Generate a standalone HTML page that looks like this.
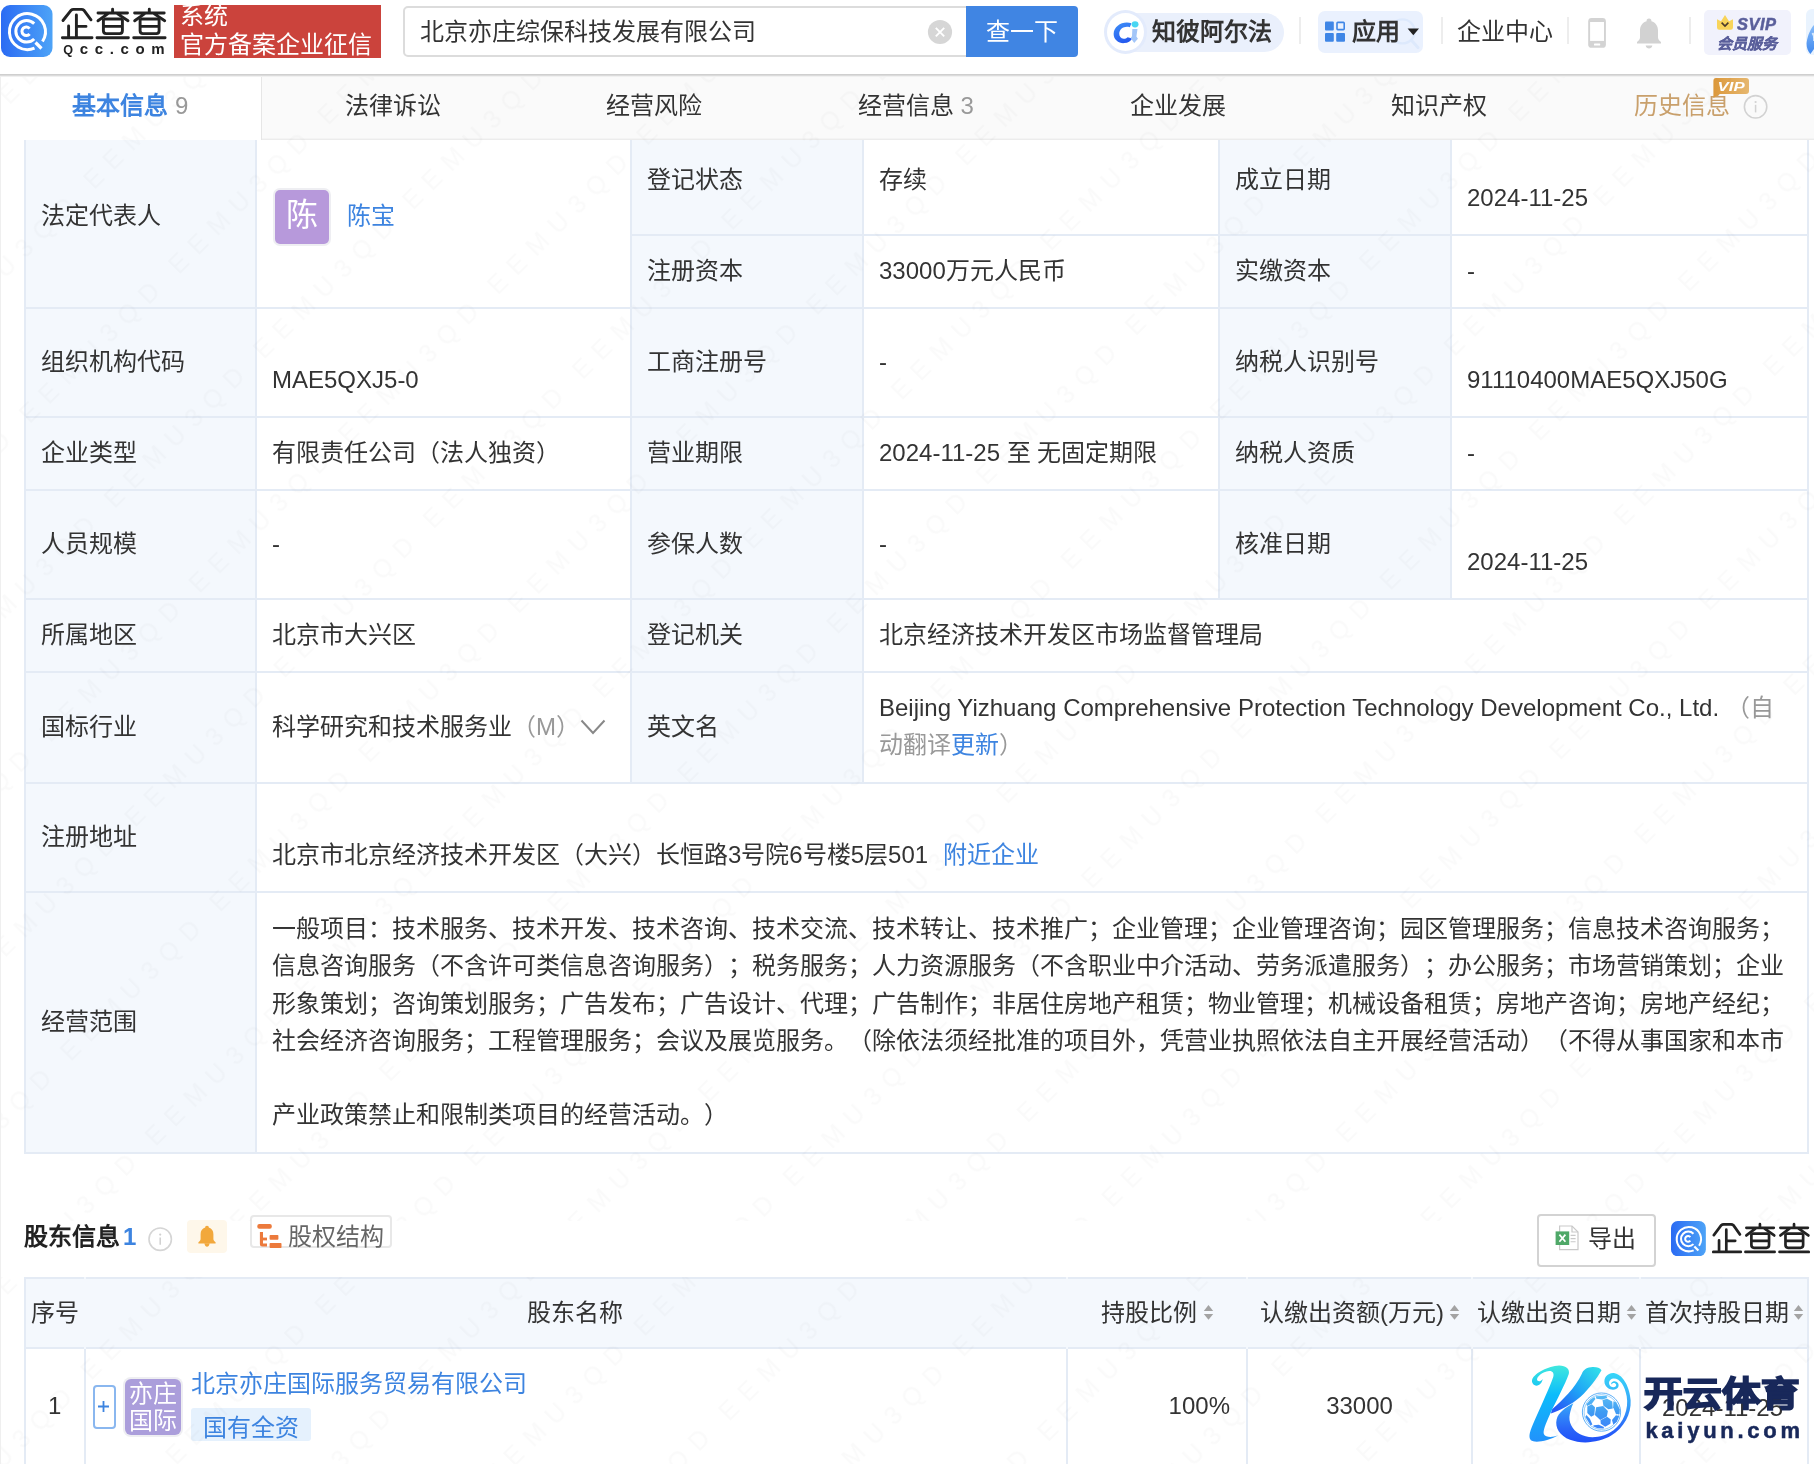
<!DOCTYPE html>
<html lang="zh-CN">
<head>
<meta charset="utf-8">
<title>企查查</title>
<style>
*{box-sizing:border-box;margin:0;padding:0}
html,body{width:1814px;height:1464px;overflow:hidden;background:#fff}
body{will-change:transform;position:relative;text-spacing-trim:space-all;font-family:"Liberation Sans",sans-serif;font-size:24px;color:#333;line-height:30px}
.a{position:absolute;white-space:nowrap}
.t{position:absolute;white-space:nowrap;height:30px;line-height:30px;font-size:24px}
.blue{color:#3d84e0}
.gray{color:#999}
/* header */
#hdr{position:absolute;left:0;top:0;width:1814px;height:77px;background:linear-gradient(#fff 0,#fff 74px,#cfcfcf 74px,#cfcfcf 75px,#dbdbdb 75px,#dbdbdb 76px,#f0f0f0 76px,#f0f0f0 77px);z-index:2}
.sep{position:absolute;width:2px;top:17px;height:27px;background:#ededed}
/* tabs */
#tabs{position:absolute;left:0;top:76px;width:1832px;height:64px;background:#fafafa;border-bottom:1px solid #ececec;box-shadow:inset 0 -1px 0 #f4f4f4}
.tab{position:absolute;top:0;height:63px;width:261.7px;text-align:center;line-height:60px;font-size:24px;color:#333}
.tab.on{background:#fff;color:#3d84e0;height:64px;font-weight:bold;border-right:1px solid #e6e6e6}
/* info table */
.cell{position:absolute;border-right:2px solid #e4ebf5;border-bottom:2px solid #e4ebf5;background:#fff}
.lb{background:#f4f8fd}
</style>
</head>
<body>
<!-- HEADER -->
<div id="hdr">
<!-- qcc logo icon -->
<svg class="a" style="left:1px;top:5px" width="52" height="52" viewBox="0 0 52 52">
<defs><linearGradient id="lg1" x1="0" y1="0" x2="1" y2="0"><stop offset="0" stop-color="#2b6bf3"/><stop offset="1" stop-color="#4da3f7"/></linearGradient></defs>
<rect x="0" y="0" width="51.5" height="52" rx="9" fill="url(#lg1)"/>
<g fill="none" stroke="#fff" stroke-width="3">
<path d="M41.5 36.5 A18 18 0 1 0 33.5 43.2"/>
<path d="M34.5 37.5 L40.5 43.5" stroke-width="3.2"/>
<path d="M33.2 18.6 A10.8 10.8 0 1 0 33.2 34"/>
<path d="M28.6 23.6 A4.3 4.3 0 1 0 28.6 29"/>
</g>
</svg>
<!-- qcc logotype -->
<svg class="a" style="left:58px;top:5px" width="112" height="52" viewBox="58 5 112 52">
<g fill="none" stroke="#222" stroke-width="2.9" stroke-linecap="round" stroke-linejoin="round">
<path d="M63 20.5 L71 10.3 Q72 9.4 73.5 9.4 L81.5 9.4 Q83 9.4 84 10.3 L91 19.8"/>
<path d="M76.4 15 V37.6 M76.6 26.4 H86 M68.6 26 V37.6 M62.4 37.8 H92"/>
<path d="M98 13 H127.5 M112.6 9.3 V13 M108 13.6 L98 20.8 M117.3 13.6 L128 20.8"/>
<path d="M103.4 20 V30.8 Q103.4 33.6 106.2 33.6 H119.6 Q122.4 33.6 122.4 30.8 V20 M103.4 26.4 H122.4 M105 19 H121 M97 37.8 H128.4"/>
<path d="M134.6 13 H164.2 M149.3 9.3 V13 M144.7 13.6 L134.7 20.8 M154 13.6 L164.7 20.8"/>
<path d="M140.1 20 V30.8 Q140.1 33.6 142.9 33.6 H156.3 Q159.1 33.6 159.1 30.8 V20 M140.1 26.4 H159.1 M141.7 19 H157.7 M133.7 37.8 H165.1"/>
</g>
<text x="63.2" y="53.5" font-family="Liberation Sans, sans-serif" font-weight="bold" font-size="15" fill="#222" textLength="101.4" lengthAdjust="spacing"><tspan font-size="12.6">Q</tspan>cc.com</text>
</svg>
<!-- red box -->
<div class="a" style="left:174px;top:5px;width:207px;height:53px;background:#cb433c;overflow:hidden">
<div class="a" style="left:6px;top:-4px;font-size:24px;line-height:29px;color:#fff">系统<br>官方备案企业征信</div>
</div>
<div class="a" style="left:181px;top:70px;width:48px;height:4px;overflow:hidden;opacity:.0"></div>
<!-- search -->
<div class="a" style="left:403px;top:6px;width:566px;height:51px;border:2px solid #dcdcdc;border-radius:5px 0 0 5px;background:#fff"></div>
<div class="t" style="left:420px;top:17px;color:#333">北京亦庄综保科技发展有限公司</div>
<svg class="a" style="left:927px;top:19px" width="26" height="26" viewBox="0 0 26 26"><circle cx="13" cy="13" r="12.1" fill="#d6d6d6"/><path d="M8.8 8.9 L17.2 17.3 M17.2 8.9 L8.8 17.3" stroke="#fff" stroke-width="1.9" fill="none"/></svg>
<div class="a" style="left:966px;top:6px;width:112px;height:51px;background:#4085e3;border-radius:0 4px 4px 0;color:#fff;text-align:center;font-size:24px;line-height:52px">查一下</div>
<!-- zhibi alpha -->
<div class="a" style="left:1106px;top:13px;width:178px;height:39px;border-radius:20px;background:#eaf0fc"></div>
<div class="a" style="left:1104px;top:10px;width:43px;height:44px;border-radius:50%;background:#fff;border:3.5px solid #e3ebfc"></div>
<svg class="a" style="left:1109.6px;top:16.6px" width="33" height="30.6" viewBox="0 0 30 30" preserveAspectRatio="none">
<defs><linearGradient id="lg2" x1="0.2" y1="0" x2="0.6" y2="1"><stop offset="0" stop-color="#3d8df7"/><stop offset="1" stop-color="#2458ee"/></linearGradient></defs>
<path d="M19.5 6.2 C12 3.5 3.5 8.5 3.3 16.5 C3.2 22.5 8 26 13 25.6 C16.5 25.3 18.8 23.5 20.2 21 L16 19.8 C14.8 21 13.6 21.4 12.4 21.3 C9.8 21.1 8.2 19 8.4 16 C8.7 11.5 13 8.5 18 10 Z" fill="url(#lg2)"/>
<circle cx="22.8" cy="7.2" r="3.1" fill="#48d6f2"/>
<path d="M20.3 11.8 L25 11.8 L24 19.2 L25.4 21.4 L22 25.6 L18.8 20.7 L20 18.8 Z" fill="#a3c6f8"/>
</svg>
<div class="t" style="left:1152px;top:17px;font-weight:bold;color:#333">知彼阿尔法</div>
<div class="sep" style="left:1299px"></div>
<!-- apps -->
<div class="a" style="left:1318px;top:11px;width:105px;height:42px;border-radius:7px;background:#eaf1fe"></div>
<svg class="a" style="left:1384px;top:14px" width="40" height="40" viewBox="1384 14 40 40"><circle cx="1402.6" cy="31.4" r="12" fill="none" stroke="#dde9fc" stroke-width="2.4"/><path d="M1411.6 40.6 L1418 47.6" stroke="#dde9fc" stroke-width="3" stroke-linecap="round"/></svg>
<svg class="a" style="left:1324px;top:21px" width="22" height="22" viewBox="0 0 22 22"><rect x="1" y="0.6" width="8.8" height="8.8" rx="1" fill="#3f86e6"/><rect x="1" y="12" width="8.8" height="8.8" rx="1" fill="#3f86e6"/><rect x="12.2" y="12" width="8.8" height="8.8" rx="1" fill="#3f86e6"/><rect x="13" y="1.4" width="7.2" height="7.2" rx=".8" fill="none" stroke="#3f86e6" stroke-width="1.6"/></svg>
<div class="t" style="left:1352px;top:17px;font-weight:bold;color:#333">应用</div>
<svg class="a" style="left:1407px;top:28px" width="13" height="8" viewBox="0 0 13 8"><path d="M0.6 0.6 H12 L6.3 7.2 Z" fill="#222"/></svg>
<div class="sep" style="left:1441px"></div>
<div class="t" style="left:1457px;top:17px;color:#333">企业中心</div>
<div class="sep" style="left:1567px"></div>
<!-- phone -->
<svg class="a" style="left:1587px;top:17px" width="20" height="32" viewBox="0 0 20 32"><rect x="1.2" y="1.1" width="17.7" height="29.7" rx="3.4" fill="#d3d3d3"/><rect x="3.1" y="5" width="13.9" height="18.9" fill="#fff"/><rect x="7" y="26.6" width="6.2" height="1.9" rx=".6" fill="#fff"/></svg>
<!-- bell -->
<svg class="a" style="left:1635px;top:17px" width="28" height="34" viewBox="0 0 28 34"><path d="M14 1.6 C15.6 1.6 16.6 2.7 16.4 4.2 C20.6 5.4 23 9 23 13.5 V20.5 C23 22.3 24.4 23.6 26 25 V26.6 H2 V25 C3.6 23.6 5 22.3 5 20.5 V13.5 C5 9 7.4 5.4 11.6 4.2 C11.4 2.7 12.4 1.6 14 1.6 Z" fill="#d2d2d2"/><path d="M10.6 28.6 H17.4 C17 30.6 15.6 31.6 14 31.6 C12.4 31.6 11 30.6 10.6 28.6 Z" fill="#d2d2d2"/></svg>
<div class="sep" style="left:1689px;top:17px"></div>
<!-- svip -->
<div class="a" style="left:1704px;top:10px;width:87px;height:45px;border-radius:5px;background:#f1f2fc"></div>
<svg class="a" style="left:1716px;top:14px" width="18" height="17" viewBox="0 0 18 17"><path d="M1 5.2 L5 7.2 L9 1 L13 7.2 L17 5.2 V13.6 Q17 15.8 14.8 15.8 H3.2 Q1 15.8 1 13.6 Z" fill="#f8d45a"/><path d="M5.6 8.6 L9 12 L12.4 8.6" fill="none" stroke="#4a3a2a" stroke-width="1.6"/></svg>
<div class="a" style="left:1737px;top:14px;font-size:16.5px;line-height:20px;font-weight:bold;font-style:italic;color:#5a5f9b;letter-spacing:.5px;-webkit-text-stroke:.5px #5a5f9b">SVIP</div>
<div class="a" style="left:1717px;top:34px;font-size:15px;line-height:20px;font-weight:bold;font-style:italic;color:#5a5f9b;-webkit-text-stroke:.3px #5a5f9b">会员服务</div>
<!-- avatar partial -->
<div class="a" style="left:1806px;top:9px;width:46px;height:46px;border-radius:6px;background:#e9f3fe;overflow:hidden"><svg class="a" style="left:0;top:0" width="46" height="46" viewBox="0 0 46 46"><defs><linearGradient id="lg4" x1="0" y1="0" x2="0" y2="1"><stop offset="0" stop-color="#8cc0fa"/><stop offset="1" stop-color="#3d86ee"/></linearGradient></defs><path d="M8 16 C5 19 1.6 26 0.6 34 C0.4 38 1.6 42 4.4 45 L8 40 L8 46 L46 46 L46 14 Z" fill="url(#lg4)"/><path d="M6.4 24 C8 26 8.4 29 8 32" fill="none" stroke="#d8eafd" stroke-width="2"/></svg></div>
</div>

<!-- TABS -->
<div id="tabs">
<div class="tab on" style="left:0"><span style="font-weight:bold">基本信息</span> <span style="color:#999;font-weight:normal">9</span></div>
<div class="tab" style="left:261.7px">法律诉讼</div>
<div class="tab" style="left:523.4px">经营风险</div>
<div class="tab" style="left:785.1px">经营信息 <span style="color:#999">3</span></div>
<div class="tab" style="left:1046.8px">企业发展</div>
<div class="tab" style="left:1308.5px">知识产权</div>
<div class="tab" style="left:1570.2px;color:#c9a06c;text-align:left;padding-left:64px">历史信息</div>
<svg class="a" style="left:1712px;top:1px" width="38" height="22" viewBox="0 0 38 22"><defs><linearGradient id="lg3" x1="0" y1="0" x2="1" y2="0"><stop offset="0" stop-color="#dc983a"/><stop offset="1" stop-color="#e6b76f"/></linearGradient></defs><path d="M4 1 H34 Q37 1 37 4 V14 Q37 17 34 17 H8 L1.4 21 V4 Q1.4 1 4 1 Z" fill="url(#lg3)"/><text x="5.6" y="14" font-family="Liberation Sans, sans-serif" font-weight="bold" font-style="italic" font-size="13.5" fill="#fff" textLength="27" lengthAdjust="spacingAndGlyphs">VIP</text></svg>
<svg class="a" style="left:1743px;top:18px" width="26" height="26" viewBox="0 0 26 26"><circle cx="12.6" cy="12.8" r="11.2" fill="none" stroke="#d2d2d2" stroke-width="1.6"/><circle cx="12.6" cy="8" r="1.1" fill="#d2d2d2"/><path d="M12.6 10.8 V18.4" stroke="#d2d2d2" stroke-width="1.5"/></svg>
</div>
<div class="a pageborder" style="left:0;top:77px;width:1px;height:1400px;background:#efefef;z-index:3"></div>

<!-- INFO TABLE -->
<div id="info">
<div class="cell lb" style="left:26px;top:140px;width:231px;height:169px"></div>
<div class="cell" style="left:257px;top:140px;width:375px;height:169px"></div>
<div class="cell lb" style="left:632px;top:140px;width:232px;height:96px"></div>
<div class="cell" style="left:864px;top:140px;width:356px;height:96px"></div>
<div class="cell lb" style="left:1220px;top:140px;width:232px;height:96px"></div>
<div class="cell" style="left:1452px;top:140px;width:357px;height:96px"></div>
<div class="cell lb" style="left:632px;top:236px;width:232px;height:73px"></div>
<div class="cell" style="left:864px;top:236px;width:356px;height:73px"></div>
<div class="cell lb" style="left:1220px;top:236px;width:232px;height:73px"></div>
<div class="cell" style="left:1452px;top:236px;width:357px;height:73px"></div>
<div class="cell lb" style="left:26px;top:309px;width:231px;height:109px"></div>
<div class="cell" style="left:257px;top:309px;width:375px;height:109px"></div>
<div class="cell lb" style="left:632px;top:309px;width:232px;height:109px"></div>
<div class="cell" style="left:864px;top:309px;width:356px;height:109px"></div>
<div class="cell lb" style="left:1220px;top:309px;width:232px;height:109px"></div>
<div class="cell" style="left:1452px;top:309px;width:357px;height:109px"></div>
<div class="cell lb" style="left:26px;top:418px;width:231px;height:73px"></div>
<div class="cell" style="left:257px;top:418px;width:375px;height:73px"></div>
<div class="cell lb" style="left:632px;top:418px;width:232px;height:73px"></div>
<div class="cell" style="left:864px;top:418px;width:356px;height:73px"></div>
<div class="cell lb" style="left:1220px;top:418px;width:232px;height:73px"></div>
<div class="cell" style="left:1452px;top:418px;width:357px;height:73px"></div>
<div class="cell lb" style="left:26px;top:491px;width:231px;height:109px"></div>
<div class="cell" style="left:257px;top:491px;width:375px;height:109px"></div>
<div class="cell lb" style="left:632px;top:491px;width:232px;height:109px"></div>
<div class="cell" style="left:864px;top:491px;width:356px;height:109px"></div>
<div class="cell lb" style="left:1220px;top:491px;width:232px;height:109px"></div>
<div class="cell" style="left:1452px;top:491px;width:357px;height:109px"></div>
<div class="cell lb" style="left:26px;top:600px;width:231px;height:73px"></div>
<div class="cell" style="left:257px;top:600px;width:375px;height:73px"></div>
<div class="cell lb" style="left:632px;top:600px;width:232px;height:73px"></div>
<div class="cell" style="left:864px;top:600px;width:945px;height:73px"></div>
<div class="cell lb" style="left:26px;top:673px;width:231px;height:111px"></div>
<div class="cell" style="left:257px;top:673px;width:375px;height:111px"></div>
<div class="cell lb" style="left:632px;top:673px;width:232px;height:111px"></div>
<div class="cell" style="left:864px;top:673px;width:945px;height:111px"></div>
<div class="cell lb" style="left:26px;top:784px;width:231px;height:109px"></div>
<div class="cell" style="left:257px;top:784px;width:1552px;height:109px"></div>
<div class="cell lb" style="left:26px;top:893px;width:231px;height:261px"></div>
<div class="cell" style="left:257px;top:893px;width:1552px;height:261px"></div>
<div class="a" style="left:24px;top:140px;width:2px;height:1014px;background:#e4ebf5"></div>
<div class="t" style="left:41px;top:200.5px">法定代表人</div>
<div class="t" style="left:647px;top:165px">登记状态</div>
<div class="t" style="left:879px;top:165px">存续</div>
<div class="t" style="left:1235px;top:165px">成立日期</div>
<div class="t" style="left:1467px;top:183px">2024-11-25</div>
<div class="t" style="left:647px;top:256px">注册资本</div>
<div class="t" style="left:879px;top:256px">33000万元人民币</div>
<div class="t" style="left:1235px;top:256px">实缴资本</div>
<div class="t" style="left:1467px;top:256px">-</div>
<div class="t" style="left:41px;top:347px">组织机构代码</div>
<div class="t" style="left:272px;top:364.5px">MAE5QXJ5-0</div>
<div class="t" style="left:647px;top:347px">工商注册号</div>
<div class="t" style="left:879px;top:347px">-</div>
<div class="t" style="left:1235px;top:347px">纳税人识别号</div>
<div class="t" style="left:1467px;top:364.5px">91110400MAE5QXJ50G</div>
<div class="t" style="left:41px;top:438px">企业类型</div>
<div class="t" style="left:272px;top:438px">有限责任公司（法人独资）</div>
<div class="t" style="left:647px;top:438px">营业期限</div>
<div class="t" style="left:879px;top:438px">2024-11-25 至 无固定期限</div>
<div class="t" style="left:1235px;top:438px">纳税人资质</div>
<div class="t" style="left:1467px;top:438px">-</div>
<div class="t" style="left:41px;top:528.5px">人员规模</div>
<div class="t" style="left:272px;top:528.5px">-</div>
<div class="t" style="left:647px;top:528.5px">参保人数</div>
<div class="t" style="left:879px;top:528.5px">-</div>
<div class="t" style="left:1235px;top:528.5px">核准日期</div>
<div class="t" style="left:1467px;top:546.5px">2024-11-25</div>
<div class="t" style="left:41px;top:620px">所属地区</div>
<div class="t" style="left:272px;top:620px">北京市大兴区</div>
<div class="t" style="left:647px;top:620px">登记机关</div>
<div class="t" style="left:879px;top:620px">北京经济技术开发区市场监督管理局</div>
<div class="t" style="left:41px;top:712px">国标行业</div>
<div class="t" style="left:272px;top:712px">科学研究和技术服务业<span class="gray">（M）</span></div>
<div class="t" style="left:647px;top:712px">英文名</div>
<div class="t" style="left:879px;top:692.5px">Beijing Yizhuang Comprehensive Protection Technology Development Co., Ltd. <span class="gray">（自</span></div>
<div class="t" style="left:879px;top:730px"><span class="gray">动翻译</span><span class="blue">更新</span><span class="gray">）</span></div>
<div class="t" style="left:41px;top:822px">注册地址</div>
<div class="t" style="left:272px;top:840px">北京市北京经济技术开发区（大兴）长恒路3号院6号楼5层501<span class="blue" style="margin-left:15px">附近企业</span></div>
<div class="t" style="left:41px;top:1006.5px">经营范围</div>
<div class="t" style="left:272px;top:913.5px">一般项目：技术服务、技术开发、技术咨询、技术交流、技术转让、技术推广；企业管理；企业管理咨询；园区管理服务；信息技术咨询服务；</div>
<div class="t" style="left:272px;top:951.0px">信息咨询服务（不含许可类信息咨询服务）；税务服务；人力资源服务（不含职业中介活动、劳务派遣服务）；办公服务；市场营销策划；企业</div>
<div class="t" style="left:272px;top:988.5px">形象策划；咨询策划服务；广告发布；广告设计、代理；广告制作；非居住房地产租赁；物业管理；机械设备租赁；房地产咨询；房地产经纪；</div>
<div class="t" style="left:272px;top:1026.0px">社会经济咨询服务；工程管理服务；会议及展览服务。（除依法须经批准的项目外，凭营业执照依法自主开展经营活动）（不得从事国家和本市</div>
<div class="t" style="left:272px;top:1100px">产业政策禁止和限制类项目的经营活动。）</div>
<!-- legal rep avatar -->
<div class="a" style="left:273px;top:188px;width:58px;height:58px;border-radius:7px;background:#eeeef2"></div>
<div class="a" style="left:275px;top:190px;width:54px;height:54px;border-radius:5px;background:#b799db;color:#fff;font-size:32px;line-height:50px;text-align:center">陈</div>
<div class="t blue" style="left:347px;top:201px">陈宝</div>
<svg class="a" style="left:580px;top:719px" width="26" height="16" viewBox="0 0 26 16"><path d="M1.5 1.5 L13 14 L24.5 1.5" fill="none" stroke="#888" stroke-width="2"/></svg>
</div>

<!-- SHAREHOLDERS -->
<div id="sh">
<div class="t" style="left:24px;top:1222px;font-weight:bold;color:#222">股东信息</div>
<div class="t blue" style="left:123px;top:1222px;font-weight:bold">1</div>
<svg class="a" style="left:147.3px;top:1225.8px" width="26" height="26" viewBox="0 0 26 26"><circle cx="13.2" cy="13.2" r="11.2" fill="none" stroke="#d5d5d5" stroke-width="1.6"/><circle cx="13.2" cy="8.6" r="1.1" fill="#d0d0d0"/><path d="M13.2 11.4 V18.8" stroke="#d0d0d0" stroke-width="1.5"/></svg>
<div class="a" style="left:187px;top:1220px;width:40px;height:33px;border-radius:4px;background:#fef7ea"></div>
<svg class="a" style="left:197px;top:1225px" width="20" height="24" viewBox="0 0 20 24"><path d="M10 0.8 C11.2 0.8 11.9 1.6 11.8 2.6 C14.8 3.5 16.4 6 16.4 9.2 V14 C16.4 15.3 17.4 16.2 18.6 17.2 V18.4 H1.4 V17.2 C2.6 16.2 3.6 15.3 3.6 14 V9.2 C3.6 6 5.2 3.5 8.2 2.6 C8.1 1.6 8.8 0.8 10 0.8 Z" fill="#f2a83c"/><path d="M7.4 18.2 H12.6 C12.3 20.6 11.2 21.7 10 21.7 C8.8 21.7 7.7 20.6 7.4 18.2 Z" fill="#f2a83c"/></svg>
<div class="a" style="left:250px;top:1215px;width:142px;height:33px;border:2px solid #e8e8e8;border-radius:4px;background:#fff"></div>
<svg class="a" style="left:257px;top:1223px" width="26" height="26" viewBox="0 0 26 26"><g fill="#ec7a3c"><rect x="0.3" y="1" width="14.5" height="4.8" rx="2"/><path d="M2.9 8.9 H6 V20.6 H10 V23.4 H5.4 Q2.9 23.4 2.9 20.9 Z"/><rect x="5" y="14.6" width="5" height="2.8"/><rect x="12.6" y="12" width="8.8" height="4.8" rx=".8"/><rect x="12.6" y="20" width="11.9" height="5" rx=".8"/></g></svg>
<div class="t" style="left:288px;top:1222px;color:#666">股权结构</div>
<!-- export -->
<div class="a" style="left:1537px;top:1214px;width:119px;height:53px;border:2px solid #d3d3d3;border-radius:4px;background:#fff"></div>
<svg class="a" style="left:1555px;top:1225px" width="25" height="26" viewBox="0 0 25 26"><path d="M4.6 1 H17 L23 7 V24.6 H4.6 Z" fill="#fff" stroke="#c9c9c9" stroke-width="1.2"/><path d="M17 1 V7 H23" fill="none" stroke="#c9c9c9" stroke-width="1.2"/><path d="M15.6 10.4 H20.6 M15.6 13.6 H20.6 M15.6 16.8 H20.6" stroke="#c9c9c9" stroke-width="1.1"/><rect x="0.6" y="6.4" width="13.6" height="13.6" fill="#4fa868"/><path d="M4.4 9.6 L10.4 16.8 M10.4 9.6 L4.4 16.8" stroke="#fff" stroke-width="1.7" fill="none"/></svg>
<div class="t" style="left:1588px;top:1224px">导出</div>
<!-- small qcc logo -->
<svg class="a" style="left:1671px;top:1220.6px" width="35.2" height="35.4" viewBox="0 0 52 52">
<rect x="0" y="0" width="51.5" height="52" rx="10" fill="url(#lg1)"/>
<g fill="none" stroke="#fff" stroke-width="3">
<path d="M41.5 36.5 A18 18 0 1 0 33.5 43.2"/><path d="M34.5 37.5 L40.5 43.5" stroke-width="3.2"/><path d="M33.2 18.6 A10.8 10.8 0 1 0 33.2 34"/><path d="M28.6 23.6 A4.3 4.3 0 1 0 28.6 29"/>
</g></svg>
<svg class="a" style="left:1712.2px;top:1220.6px" width="98" height="35" viewBox="61 6 105.5 36" preserveAspectRatio="none">
<g fill="none" stroke="#222" stroke-width="2.9" stroke-linecap="round" stroke-linejoin="round">
<path d="M63 20.5 L71 10.3 Q72 9.4 73.5 9.4 L81.5 9.4 Q83 9.4 84 10.3 L91 19.8"/>
<path d="M76.4 15 V37.6 M76.6 26.4 H86 M68.6 26 V37.6 M62.4 37.8 H92"/>
<path d="M98 13 H127.5 M112.6 9.3 V13 M108 13.6 L98 20.8 M117.3 13.6 L128 20.8"/>
<path d="M103.4 20 V30.8 Q103.4 33.6 106.2 33.6 H119.6 Q122.4 33.6 122.4 30.8 V20 M103.4 26.4 H122.4 M105 19 H121 M97 37.8 H128.4"/>
<path d="M134.6 13 H164.2 M149.3 9.3 V13 M144.7 13.6 L134.7 20.8 M154 13.6 L164.7 20.8"/>
<path d="M140.1 20 V30.8 Q140.1 33.6 142.9 33.6 H156.3 Q159.1 33.6 159.1 30.8 V20 M140.1 26.4 H159.1 M141.7 19 H157.7 M133.7 37.8 H165.1"/>
</g></svg>
<!-- table -->
<div class="a" style="left:24px;top:1277px;width:1785px;height:72px;background:#f4f8fd;border-top:2px solid #e4ebf5;border-bottom:2px solid #e4ebf5"></div>
<div class="a" style="left:84px;top:1277px;width:2px;height:72px;background:#f4f8fd"></div>
<div class="a" style="left:84px;top:1349px;width:2px;height:130px;background:#e4ebf5"></div>
<div class="a" style="left:1066px;top:1277px;width:2px;height:72px;background:#f4f8fd"></div>
<div class="a" style="left:1066px;top:1349px;width:2px;height:130px;background:#e4ebf5"></div>
<div class="a" style="left:1246px;top:1277px;width:2px;height:72px;background:#f4f8fd"></div>
<div class="a" style="left:1246px;top:1349px;width:2px;height:130px;background:#e4ebf5"></div>
<div class="a" style="left:1471px;top:1277px;width:2px;height:72px;background:#f4f8fd"></div>
<div class="a" style="left:1471px;top:1349px;width:2px;height:130px;background:#e4ebf5"></div>
<div class="a" style="left:1639px;top:1277px;width:2px;height:72px;background:#f4f8fd"></div>
<div class="a" style="left:1639px;top:1349px;width:2px;height:130px;background:#e4ebf5"></div>
<div class="a" style="left:24px;top:1277px;width:2px;height:200px;background:#e4ebf5"></div>
<div class="a" style="left:1807px;top:1277px;width:2px;height:200px;background:#e4ebf5"></div>
<div class="t" style="left:31px;top:1298px">序号</div>
<div class="t" style="left:527px;top:1298px">股东名称</div>
<div class="t" style="left:1101px;top:1298px">持股比例</div>
<div class="t" style="left:1260px;top:1298px">认缴出资额(万元)</div>
<div class="t" style="left:1477px;top:1298px">认缴出资日期</div>
<div class="t" style="left:1645px;top:1298px">首次持股日期</div>
<svg class="a srt" style="left:1203px;top:1305px" width="11" height="16" viewBox="0 0 11 16"><path d="M5.5 0.1 L10.2 6.1 H0.8 Z" fill="#a3a3a3"/><path d="M5.5 14.8 L10.2 8.9 H0.8 Z" fill="#a3a3a3"/></svg>
<svg class="a srt" style="left:1449px;top:1305px" width="11" height="16" viewBox="0 0 11 16"><path d="M5.5 0.1 L10.2 6.1 H0.8 Z" fill="#a3a3a3"/><path d="M5.5 14.8 L10.2 8.9 H0.8 Z" fill="#a3a3a3"/></svg>
<svg class="a srt" style="left:1626px;top:1305px" width="11" height="16" viewBox="0 0 11 16"><path d="M5.5 0.1 L10.2 6.1 H0.8 Z" fill="#a3a3a3"/><path d="M5.5 14.8 L10.2 8.9 H0.8 Z" fill="#a3a3a3"/></svg>
<svg class="a srt" style="left:1793px;top:1305px" width="11" height="16" viewBox="0 0 11 16"><path d="M5.5 0.1 L10.2 6.1 H0.8 Z" fill="#a3a3a3"/><path d="M5.5 14.8 L10.2 8.9 H0.8 Z" fill="#a3a3a3"/></svg>
<div class="t" style="left:48px;top:1391px">1</div>
<div class="a" style="left:93px;top:1385px;width:23px;height:44px;border:2px solid #8ab7ef;border-radius:4px;background:#fff"></div>
<svg class="a" style="left:97.3px;top:1400.4px" width="13" height="13" viewBox="0 0 13 13"><path d="M6.5 1 V12 M1 6.5 H12" stroke="#3d84e0" stroke-width="1.8"/></svg>
<div class="a" style="left:123px;top:1377px;width:60px;height:60px;border-radius:8px;background:#eeeef2"></div>
<div class="a" style="left:125px;top:1379px;width:56px;height:56px;border-radius:6px;background:#ab9edb;color:#fff;font-size:24px;line-height:27px;text-align:center;padding-top:1px">亦庄<br>国际</div>
<div class="t blue" style="left:191px;top:1369px">北京亦庄国际服务贸易有限公司</div>
<div class="a" style="left:191px;top:1408px;width:120px;height:33px;border-radius:3px;background:#e5f1fd"></div>
<div class="t blue" style="left:203px;top:1413px">国有全资</div>
<div class="t" style="left:1067px;top:1391px;width:163px;text-align:right">100%</div>
<div class="t" style="left:1247px;top:1391px;width:225px;text-align:center">33000</div>
<div class="t" style="left:1662px;top:1393px">2024-11-25</div>
</div>

<!-- WATERMARK -->
<div id="wm">
<svg class="a" style="left:0;top:77px;pointer-events:none" width="1814" height="1144" viewBox="0 77 1814 1144"><defs><pattern id="wmk" width="211" height="120" patternUnits="userSpaceOnUse" patternTransform="translate(220 319) rotate(-45)"><text x="2" y="60" font-family="Liberation Sans, sans-serif" font-size="25" fill="#000" fill-opacity=".019" textLength="186" lengthAdjust="spacing">EEMU3QD</text></pattern></defs><rect x="0" y="77" width="1814" height="1144" fill="url(#wmk)"/></svg>
<svg class="a" style="left:0;top:1277px;pointer-events:none" width="1814" height="187" viewBox="0 1277 1814 187"><rect x="0" y="1277" width="1814" height="187" fill="url(#wmk)"/></svg>
<svg class="a" style="left:1524px;top:1358px" width="116" height="92" viewBox="0 0 1814 1439">
<defs>
<linearGradient id="kg1" x1="0" y1="115" x2="0" y2="1320" gradientUnits="userSpaceOnUse"><stop offset="0" stop-color="#40e8de"/><stop offset=".38" stop-color="#0cbcfb"/><stop offset="1" stop-color="#2291fb"/></linearGradient>
<linearGradient id="kg2" x1="1150" y1="170" x2="520" y2="830" gradientUnits="userSpaceOnUse"><stop offset="0" stop-color="#2fdcea"/><stop offset=".5" stop-color="#1fa4f6"/><stop offset="1" stop-color="#2757f6"/></linearGradient>
<linearGradient id="kg3" x1="0" y1="235" x2="0" y2="1320" gradientUnits="userSpaceOnUse"><stop offset="0" stop-color="#36d6f8"/><stop offset=".45" stop-color="#36a4fa"/><stop offset=".8" stop-color="#2a66f8"/><stop offset="1" stop-color="#2050f8"/></linearGradient>
<linearGradient id="kg4" x1="0" y1="560" x2="0" y2="1120" gradientUnits="userSpaceOnUse"><stop offset="0" stop-color="#5cc0f6"/><stop offset=".5" stop-color="#3f9cf2"/><stop offset="1" stop-color="#3b82fb"/></linearGradient>
</defs>
<!-- upper arm of K -->
<path d="M440 800 C600 660 800 470 905 245 C935 175 985 148 1075 142 C1140 140 1190 160 1212 190 C1150 300 1030 470 880 610 C740 730 560 820 420 870 Z" fill="url(#kg2)"/>
<!-- stem with hook -->
<path d="M292 328 C262 372 214 376 204 342 C196 298 286 212 392 204 C446 200 474 238 458 292 C410 440 270 740 160 990 C100 1125 58 1235 108 1288 C168 1334 382 1302 534 1208 C434 1250 338 1240 312 1192 C292 1146 336 1036 410 872 C520 640 640 420 700 252 C722 176 660 116 548 116 C380 124 170 232 130 330 C106 392 160 444 214 430 C258 416 288 372 292 328 Z" fill="url(#kg1)"/>
<!-- leg + crescent + curl -->
<path d="M772 708 C640 780 540 850 510 960 C480 1090 560 1210 720 1280 C900 1350 1180 1330 1370 1210 C1560 1090 1680 880 1668 660 C1656 470 1560 270 1420 238 C1310 222 1240 310 1262 400 C1282 470 1370 520 1440 486 C1500 454 1492 372 1420 362 C1384 360 1356 388 1366 416 C1380 384 1430 380 1442 420 C1446 460 1390 470 1352 440 C1310 400 1330 330 1400 322 C1500 318 1580 440 1606 600 C1640 800 1560 1010 1400 1130 C1240 1250 1010 1270 870 1190 C750 1120 690 1000 716 880 C728 820 746 760 772 708 Z" fill="url(#kg3)"/>
<!-- ball -->
<circle cx="1212" cy="846" r="299" fill="#fff" stroke="#3f9ff5" stroke-width="13"/>
<circle cx="1212" cy="846" r="272" fill="#fff" stroke="#4eadf6" stroke-width="9"/>
<g fill="url(#kg4)">
<path d="M1128 772 L1238 750 L1312 828 L1296 915 L1192 968 L1108 892 Z"/>
<path d="M1122 600 L1288 590 L1302 626 L1226 650 L1132 636 Z"/>
<path d="M1228 656 L1300 636 L1380 682 L1388 790 L1320 800 L1242 748 Z"/>
<path d="M1398 676 L1440 692 L1498 800 L1494 876 L1440 880 L1394 772 Z"/>
<path d="M1196 972 L1300 920 L1358 960 L1350 1030 L1270 1076 L1200 1030 Z"/>
<path d="M1438 896 L1490 906 L1450 1000 L1396 1040 L1376 970 Z"/>
<path d="M990 760 L1060 722 L1110 770 L1100 890 L1050 920 L990 860 Z"/>
<path d="M1100 610 L1116 640 L1060 716 L986 750 L976 722 L1040 650 Z"/>
<path d="M976 890 L1030 950 L1070 1040 L1040 1052 L960 922 Z"/>
<path d="M1090 1050 L1170 1046 L1250 1080 L1246 1104 L1150 1100 L1080 1066 Z"/>
</g>
</svg>
<div class="a" style="left:1644px;top:1368px;width:156px;height:52px;font-size:38.5px;line-height:52px;font-weight:900;color:#18285a;letter-spacing:0;-webkit-text-stroke:2.1px #18285a;paint-order:stroke fill;transform:scaleY(.89);transform-origin:50% 51%">开云体育</div>
<svg class="a" style="left:1640px;top:1414px" width="170" height="36" viewBox="0 0 170 36"><text x="5.4" y="23.6" font-family="Liberation Sans, sans-serif" font-weight="bold" font-size="22" fill="#18285a" stroke="#18285a" stroke-width=".5" textLength="154.6" lengthAdjust="spacing">kaiyun.com</text></svg>
</div>

</body>
</html>
